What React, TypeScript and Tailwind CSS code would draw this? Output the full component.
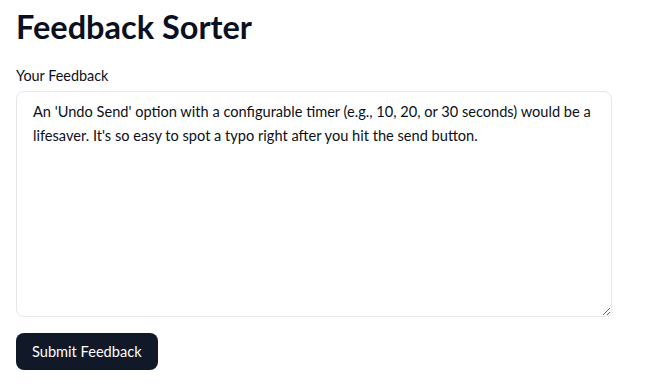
import React, { useState } from 'react';

const App: React.FC = () => {
  const [text, setText] = useState(
    "An 'Undo Send' option with a configurable timer (e.g., 10, 20, or 30 seconds) would be a lifesaver. It's so easy to spot a typo right after you hit the send button."
  );

  return (
    <div className="min-h-screen bg-white px-4 pt-[7px] text-[#0b1020]" style={{ fontFamily: 'Lato, "Noto Sans", sans-serif' }}>
      <div className="w-[596px]">
        <h1 className="text-[32.5px] font-bold leading-[40px] mb-[19px]">Feedback Sorter</h1>

        <label htmlFor="feedback" className="block text-[14.4px] leading-[20px] mb-[5px]">
          Your Feedback
        </label>
        <textarea
          id="feedback"
          value={text}
          onChange={(e) => setText(e.target.value)}
          className="block w-full h-[226px] rounded-lg border border-gray-200 px-4 py-[8px] text-[14.6px] leading-[24px] outline-none"
        />

        <button className="mt-[16px] rounded-lg bg-[#111827] px-4 h-[37px] text-[14.6px] text-white">
          Submit Feedback
        </button>
      </div>
    </div>
  );
};

export default App;
